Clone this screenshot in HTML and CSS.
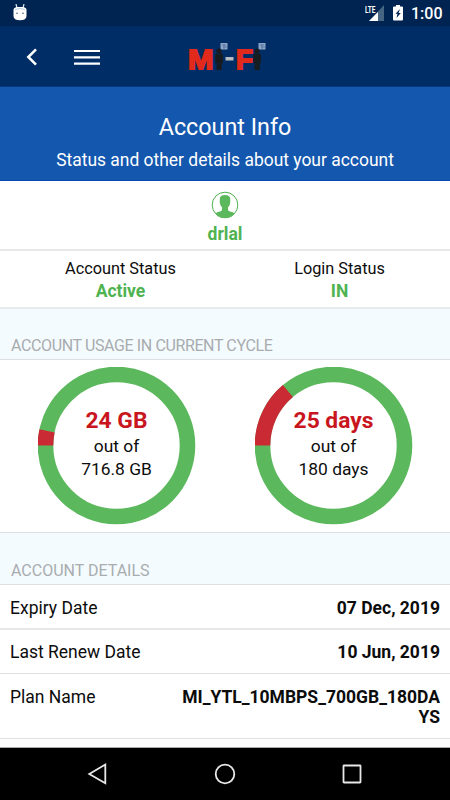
FILE: index.html
```html
<!DOCTYPE html>
<html lang="en">
<head>
<meta charset="utf-8">
<title>Account Info</title>
<link rel="stylesheet" href="styles.css">
</head>
<body>
<div class="statusbar">
  <svg class="android" width="14" height="17" viewBox="0 0 14 17"><path d="M3 0l1 4M11 0l-1 4" stroke="#dce6f0" stroke-width="1.2"/><path d="M.5 6Q.5 3.500 4 3h6q3.500.5 3.500 3v6q0 4.200-6.500 4.200T.5 12z" fill="#fff"/><path d="M2 5.500q5-2 10 0" stroke="#b9c9d8" fill="none"/><circle cx="4" cy="9.300" r=".8" fill="#42566c"/><circle cx="10" cy="9.300" r=".8" fill="#42566c"/></svg>
  <div class="indicators">
    <svg width="20" height="18" viewBox="0 0 20 18"><path d="M4 17L19 1v16z" fill="#456583"/><path d="M0 0h12v9H0z" fill="#002451"/><path d="M4 17l9-9v9z" fill="#fff"/><text x="0" y="8.500" class="lte" textLength="10.500" lengthAdjust="spacingAndGlyphs">LTE</text></svg>
    <svg class="battery" width="10" height="17" viewBox="0 0 10 17"><path d="M3 1h4v1.500h2q1 0 1 1V15q0 1.500-1 1.500H1q-1 0-1-1.500V3.500q0-1 1-1h2z" fill="#fff"/><path d="M7 5L2.500 9.700h2L3.500 14l4.300-5H5.600z" fill="#002451"/></svg>
    <span class="clock">1:00</span>
  </div>
</div>
<header class="toolbar">
  <svg class="back" width="12" height="18" viewBox="0 0 12 18"><path d="M10 1.300L2.300 9l7.700 7.700" fill="none" stroke="#fff" stroke-width="2.500"/></svg>
  <svg class="menu" width="26" height="16" viewBox="0 0 26 16"><path d="M0 2h26M0 8.300h26M0 14.600h26" stroke="#fff" stroke-width="2.200"/></svg>
  <svg class="logo" width="82" height="34" viewBox="0 0 82 34">
    <text class="brand" x="1" y="28" textLength="25.500" lengthAdjust="spacingAndGlyphs">M</text>
    <text class="brand" x="49" y="28" textLength="17" lengthAdjust="spacingAndGlyphs">F</text>
    <path d="M38.500 16h8v3.500h-8z" fill="#b9bcc0"/>
    <g id="person"><path d="M33.500 2h7v6.500h-7z" fill="#8da5c7"/><path d="M35 4h4M36 6h4M37 3v5" stroke="#526f9e" stroke-width=".8"/><circle cx="32" cy="10" r="2.600" fill="#171c20"/><path d="M29 12.500h6l1 2v7.500h-1.200v7h-5.200v-7h-1.400v-7.500z" fill="#171c20"/></g>
    <use href="#person" x="38"/>
  </svg>
</header>
<section class="hero"><h1>Account Info</h1><p>Status and other details about your account</p></section>
<section class="user">
  <svg width="28" height="28" viewBox="0 0 28 28"><circle cx="14" cy="14" r="12.800" fill="none" stroke="#4eb350" stroke-width="1"/><path d="M8.800 8Q8.700 4 14 4t5.200 4q.5 6-2.200 8.300v2.500q0 1.200 2 1.800 3 .8 4.800 1.800Q20 27 14 27T4.200 22.400q1.800-1 4.800-1.800 2-.6 2-1.800v-2.500Q8.300 14 8.800 8z" fill="#5cb85c"/></svg>
  <strong>drlal</strong>
</section>
<section class="statuses">
  <div class="status"><span>Account Status</span><strong>Active</strong></div>
  <div class="status second"><span>Login Status</span><strong>IN</strong></div>
</section>
<h2 class="band usage">ACCOUNT USAGE IN CURRENT CYCLE</h2>
<section class="charts">
  <div class="chart">
    <svg class="ring" viewBox="0 0 158 158"><circle class="total" cx="78.500" cy="78.500" r="71"/><circle class="used" cx="78.500" cy="78.500" r="71" pathLength="360" stroke-dasharray="12 348" transform="rotate(180 78.500 78.500)"/></svg>
    <div class="chart-text"><b>24 GB</b><span>out of</span><span>716.8 GB</span></div>
  </div>
  <div class="chart">
    <svg class="ring" viewBox="0 0 158 158"><circle class="total" cx="78.500" cy="78.500" r="71"/><circle class="used" cx="78.500" cy="78.500" r="71" pathLength="360" stroke-dasharray="50 310" transform="rotate(180 78.500 78.500)"/></svg>
    <div class="chart-text"><b>25 days</b><span>out of</span><span>180 days</span></div>
  </div>
</section>
<h2 class="band details">ACCOUNT DETAILS</h2>
<section class="rows">
  <div class="row expiry"><span>Expiry Date</span><b>07 Dec, 2019</b></div>
  <div class="row renew"><span>Last Renew Date</span><b>10 Jun, 2019</b></div>
  <div class="row plan"><span>Plan Name</span><b>MI_YTL_10MBPS_700GB_180DAYS</b></div>
</section>
<nav class="navbar">
  <svg width="22" height="24" viewBox="0 0 22 24"><path d="M18.300 2.500v18.800L2.300 12z"/></svg>
  <svg width="22" height="24" viewBox="0 0 22 24"><circle cx="11" cy="12" r="9.300"/></svg>
  <svg width="22" height="24" viewBox="0 0 22 24"><rect x="2.500" y="3.500" width="17" height="17" rx=".5"/></svg>
</nav>
</body>
</html>
```

FILE: styles.css
```css
* { box-sizing: border-box; }
body { margin: 0; width: 450px; height: 800px; overflow: hidden; display: flex; flex-direction: column; background: #fff; color: #0c0c0c; font: 16.5px/20px Roboto, sans-serif; }
body > * { flex-shrink: 0; }
h1, h2, p { margin: 0; font-weight: 400; }
svg { display: block; }
.statusbar { height: 26px; background: #002451; color: #fff; display: flex; justify-content: space-between; padding: 4px 9px 0 13px; }
.indicators { display: flex; }
.battery { margin-left: 8px; }
.lte { font: 700 9px Roboto, sans-serif; fill: #fff; }
.clock { margin-left: 8px; font-size: 16px; font-weight: 500; line-height: 20px; width: 30px; }
.toolbar { height: 61px; background: #002d65; display: flex; align-items: flex-start; border-bottom: 1px solid #073a7c; }
.back { margin: 22px 0 0 26px; }
.menu { margin: 23px 0 0 36px; }
.logo { margin: 15px 0 0 87px; }
.brand { font: 900 28px "Liberation Sans", sans-serif; fill: #e1291c; stroke: #e1291c; stroke-width: 1.800px; }
.hero { height: 94px; background: #1457ae; border-bottom: 1px solid #0745a8; text-align: center; color: #fff; padding-top: 26px; }
h1 { font-size: 23.300px; line-height: 28px; }
.hero p { font-size: 17.450px; line-height: 22px; margin-top: 8px; }
.user { height: 70px; border-bottom: 2px solid #e8e8e8; display: flex; flex-direction: column; align-items: center; padding-top: 10px; }
.user strong { font-size: 17.500px; margin-top: 4px; }
.user strong, .status strong { color: #4eb350; font-weight: 700; line-height: 22px; }
.statuses { height: 58px; border-bottom: 2px solid #e8ebec; display: flex; }
.status { width: 241px; padding-top: 7px; text-align: center; display: flex; flex-direction: column; }
.second { width: 197px; }
.status strong { font-size: 17.500px; }
.status span { font-size: 16.300px; line-height: 22px; }
.band { background: #f4fbff; border-bottom: 1px solid #dedfe1; color: #a8acae; padding-left: 11px; font-size: 16px; line-height: 20px; }
.usage { height: 51px; padding-top: 27px; letter-spacing: -.38px; }
.charts { height: 173px; border-bottom: 1px solid #dedfe1; display: flex; padding: 7px 0 0 38px; gap: 59px; }
.chart { width: 158px; height: 158px; display: grid; }
.chart > * { grid-area: 1 / 1; }
.ring { width: 158px; height: 158px; }
.ring circle { fill: none; stroke-width: 15.600px; }
.ring .total { stroke: #5cb85c; }
.ring .used { stroke: #c92a34; }
.chart-text { display: flex; flex-direction: column; align-items: center; padding: 41px 1px 0 0; font-size: 17.400px; line-height: 23px; }
.chart-text b { color: #c9151e; font-size: 22.800px; line-height: 26px; margin-bottom: 1px; }
.details { height: 52px; padding-top: 28px; }
.row { display: flex; justify-content: space-between; border-bottom: 1px solid #dedfe1; padding: 12px 10px 0; font-size: 17.500px; }
.row b { max-width: 262px; text-align: right; overflow-wrap: anywhere; }
.renew { height: 44px; }
.expiry { height: 45px; border-bottom: 2px solid #e8e8e8; padding-top: 13px; }
.plan { height: 65px; padding-top: 13px; }
.rows { height: 163px; border-bottom: 1px solid #aaa; }
.navbar { height: 52px; background: #000; display: flex; justify-content: center; gap: 105px; padding-top: 14px; }
.navbar svg { fill: none; stroke: #e8e8e8; stroke-width: 1.800px; }
```
